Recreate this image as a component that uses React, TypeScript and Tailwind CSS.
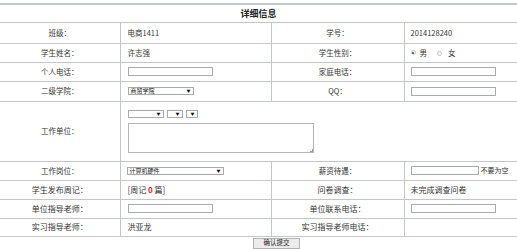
import React from "react";

const Input: React.FC<{ w?: string }> = ({ w = "w-[85px]" }) => (
  <div className={`${w} h-[9px] border border-[#a9a9b0] bg-white`} />
);

const Select: React.FC<{ w: string; label?: string }> = ({ w, label }) => (
  <div className={`${w} h-[8px] border border-[#a9a9b0] bg-white flex items-center justify-between pl-[2px] pr-[2px]`}>
    <span className="text-[6px] leading-none text-[#222]">{label}</span>
    <span className="text-[4px] leading-none text-[#111]">▼</span>
  </div>
);

const Radio: React.FC<{ on?: boolean }> = ({ on }) => (
  <span className="inline-flex w-[5px] h-[5px] rounded-full border border-[#c8c8c8] bg-[#f4f4f4] items-center justify-center">
    {on && <span className="w-[2px] h-[2px] rounded-full bg-[#444]" />}
  </span>
);

const td = "border-b border-[#c3c5cc] text-[#333] align-middle";
const vr = "border-r border-[#8390c0]";

export default function App() {
  return (
    <div
      className="w-[517px] h-[249px] bg-white overflow-hidden"
      style={{ fontFamily: '"Noto Sans CJK SC", "Liberation Sans", sans-serif' }}
    >
      <div className="h-[3px]" />
      <div className="h-[2px] bg-[#c4c7cf]" />
      <div className="h-[18px] flex items-center justify-center text-[9px] font-bold text-[#222] border-b border-[#c3c5cc]">
        详细信息
      </div>
      <table className="w-[517px] border-collapse table-fixed text-[7.5px]">
        <colgroup>
          <col className="w-[120px]" />
          <col className="w-[151px]" />
          <col className="w-[133px]" />
          <col className="w-[113px]" />
        </colgroup>
        <tbody>
          <tr className="h-[20px]">
            <td className={`${td} ${vr} text-center`}>班级：</td>
            <td className={`${td} ${vr} pl-[7px]`}>电商1411</td>
            <td className={`${td} ${vr} text-center`}>学号：</td>
            <td className={`${td} pl-[6px]`}>2014128240</td>
          </tr>
          <tr className="h-[19px]">
            <td className={`${td} ${vr} text-center`}>学生姓名：</td>
            <td className={`${td} ${vr} pl-[7px]`}>许志强</td>
            <td className={`${td} ${vr} text-center`}>学生性别：</td>
            <td className={`${td} pl-[6px]`}>
              <div className="flex items-center">
                <Radio on />
                <span className="ml-[4px]">男</span>
                <span className="ml-[10px]"><Radio /></span>
                <span className="ml-[6px]">女</span>
              </div>
            </td>
          </tr>
          <tr className="h-[19px]">
            <td className={`${td} ${vr} text-center`}>个人电话：</td>
            <td className={`${td} ${vr} pl-[7px]`}><Input /></td>
            <td className={`${td} ${vr} text-center`}>家庭电话：</td>
            <td className={`${td} pl-[6px]`}><Input /></td>
          </tr>
          <tr className="h-[20px]">
            <td className={`${td} ${vr} text-center`}>二级学院：</td>
            <td className={`${td} ${vr} pl-[7px]`}><Select w="w-[66px]" label="商贸学院" /></td>
            <td className={`${td} ${vr} text-center`}>QQ：</td>
            <td className={`${td} pl-[6px]`}><Input /></td>
          </tr>
          <tr className="h-[60px]">
            <td className={`${td} ${vr} text-center`}>工作单位：</td>
            <td className={`${td} pl-[7px]`} colSpan={3}>
              <div className="flex flex-col gap-[5px]">
                <div className="flex gap-[3px]">
                  <Select w="w-[36px]" />
                  <Select w="w-[16px]" />
                  <Select w="w-[12px]" />
                </div>
                <div className="relative w-[186px] h-[30px] border border-[#b4b4ba] bg-white">
                  <span className="absolute right-0 bottom-0 w-[3px] h-[3px] border-r border-b border-[#999]" />
                </div>
              </div>
            </td>
          </tr>
          <tr className="h-[19px]">
            <td className={`${td} ${vr} text-center`}>工作岗位：</td>
            <td className={`${td} ${vr} pl-[6px]`}><Select w="w-[97px]" label="计算机硬件" /></td>
            <td className={`${td} ${vr} text-center`}>薪资待遇：</td>
            <td className={`${td} pl-[6px]`}>
              <div className="flex items-center">
                <Input w="w-[68px]" />
                <span className="ml-[2px] text-[7px] whitespace-nowrap">不要为空</span>
              </div>
            </td>
          </tr>
          <tr className="h-[19px] text-[8px]">
            <td className={`${td} ${vr} text-center`}>学生发布周记：</td>
            <td className={`${td} ${vr} pl-[7px]`}>
              [周记 <span className="text-[#d22] font-bold">0</span> 篇]
            </td>
            <td className={`${td} ${vr} text-center`}>问卷调查：</td>
            <td className={`${td} pl-[6px]`}>未完成调查问卷</td>
          </tr>
          <tr className="h-[19px] text-[8px]">
            <td className={`${td} ${vr} text-center`}>单位指导老师：</td>
            <td className={`${td} ${vr} pl-[7px]`}><Input /></td>
            <td className={`${td} ${vr} text-center`}>单位联系电话：</td>
            <td className={`${td} pl-[6px]`}><Input /></td>
          </tr>
          <tr className="h-[18px] text-[8px]">
            <td className={`${td} ${vr} text-center`}>实习指导老师：</td>
            <td className={`${td} ${vr} pl-[7px]`}>洪亚龙</td>
            <td className={`${td} ${vr} text-center`}>实习指导老师电话：</td>
            <td className={`${td}`}></td>
          </tr>
        </tbody>
      </table>
      <div className="flex justify-center pt-[1px]">
        <div className="w-[47px] h-[11px] ml-[36px] border border-[#b2b2b2] bg-[#ececec] flex items-center justify-center text-[6.5px] text-[#222]">
          确认提交
        </div>
      </div>
    </div>
  );
}
